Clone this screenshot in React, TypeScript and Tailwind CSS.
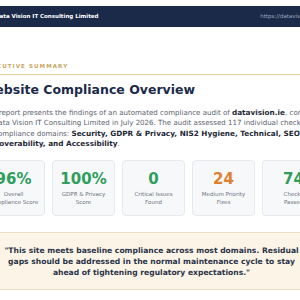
const stats = [
  { value: "96%", label: ["Overall", "Compliance Score"], color: "text-[#2e9e5b]" },
  { value: "100%", label: ["GDPR & Privacy", "Score"], color: "text-[#2e9e5b]" },
  { value: "0", label: ["Critical Issues", "Found"], color: "text-[#2e9e5b]" },
  { value: "24", label: ["Medium Priority", "Fixes"], color: "text-[#e07f2c]" },
  { value: "74", label: ["Checks", "Passed"], color: "text-[#2e9e5b]" },
];

export default function App() {
  return (
    <div className="w-[300px] h-[300px] overflow-hidden bg-white font-['DejaVu_Sans',Verdana,sans-serif]">
      <div className="ml-[-18px] w-[343px]">
        {/* top bar */}
        <div className="mt-[6px] h-[21px] bg-[#1c2a4a] flex items-center justify-between pl-[13px] pr-[10px]">
          <span className="text-[5.5px] font-bold text-white whitespace-nowrap">Data Vision IT Consulting Limited</span>
          <span className="text-[5.5px] text-[#9aa6bb] whitespace-nowrap">https://datavision.ie</span>
        </div>

        {/* section heading */}
        <div className="mt-[35px] pb-[4px] border-b border-[#e3d3a6]">
          <p className="text-[5.5px] leading-[8px] font-bold tracking-[1.1px] text-[#c7a75c]">EXECUTIVE SUMMARY</p>
        </div>
        <h1 className="mt-[7px] text-[12.5px] leading-[16px] font-bold text-[#1c2a4a] whitespace-nowrap">
          Website Compliance Overview
        </h1>

        <p className="mt-[10px] text-[7.05px] leading-[10.3px] text-[#5b6270] whitespace-nowrap">
          This report presents the findings of an automated compliance audit of{" "}
          <strong className="text-[7.3px] text-[#1f2937]">datavision.ie</strong>, conducted
          <br />
          by Data Vision IT Consulting Limited in July 2026. The audit assessed 117 individual checks across
          <br />
          six compliance domains:{" "}
          <strong className="text-[7.3px] text-[#1f2937]">
            Security, GDPR &amp; Privacy, NIS2 Hygiene, Technical, SEO &amp;
          </strong>
          <br />
          <strong className="text-[7.3px] text-[#1f2937]">Discoverability, and Accessibility</strong>.
        </p>

        {/* stat cards */}
        <div className="mt-[11px] grid grid-cols-5 gap-[7px]">
          {stats.map((s) => (
            <div
              key={s.value}
              className="h-[56px] rounded-[4px] border border-[#e6e9ee] bg-[#f7f8fa] pt-[10px] flex flex-col items-center"
            >
              <p className={`text-[15px] leading-[16px] font-bold ${s.color}`}>{s.value}</p>
              <div className="mt-[4px] text-[5.5px] leading-[7.7px] text-[#6b7280] text-center whitespace-nowrap">
                <p>{s.label[0]}</p>
                <p>{s.label[1]}</p>
              </div>
            </div>
          ))}
        </div>

        {/* quote */}
        <div className="mt-[16px] h-[58px] bg-[#fcf5e7] border-y border-[#ecdfc3] flex items-center justify-center pr-[4px]">
          <p className="text-[7.6px] leading-[11px] font-bold text-[#2b3447] text-center whitespace-nowrap">
            "This site meets baseline compliance across most domains. Residual
            <br />
            gaps should be addressed in the normal maintenance cycle to stay
            <br />
            ahead of tightening regulatory expectations."
          </p>
        </div>
      </div>
    </div>
  );
}
